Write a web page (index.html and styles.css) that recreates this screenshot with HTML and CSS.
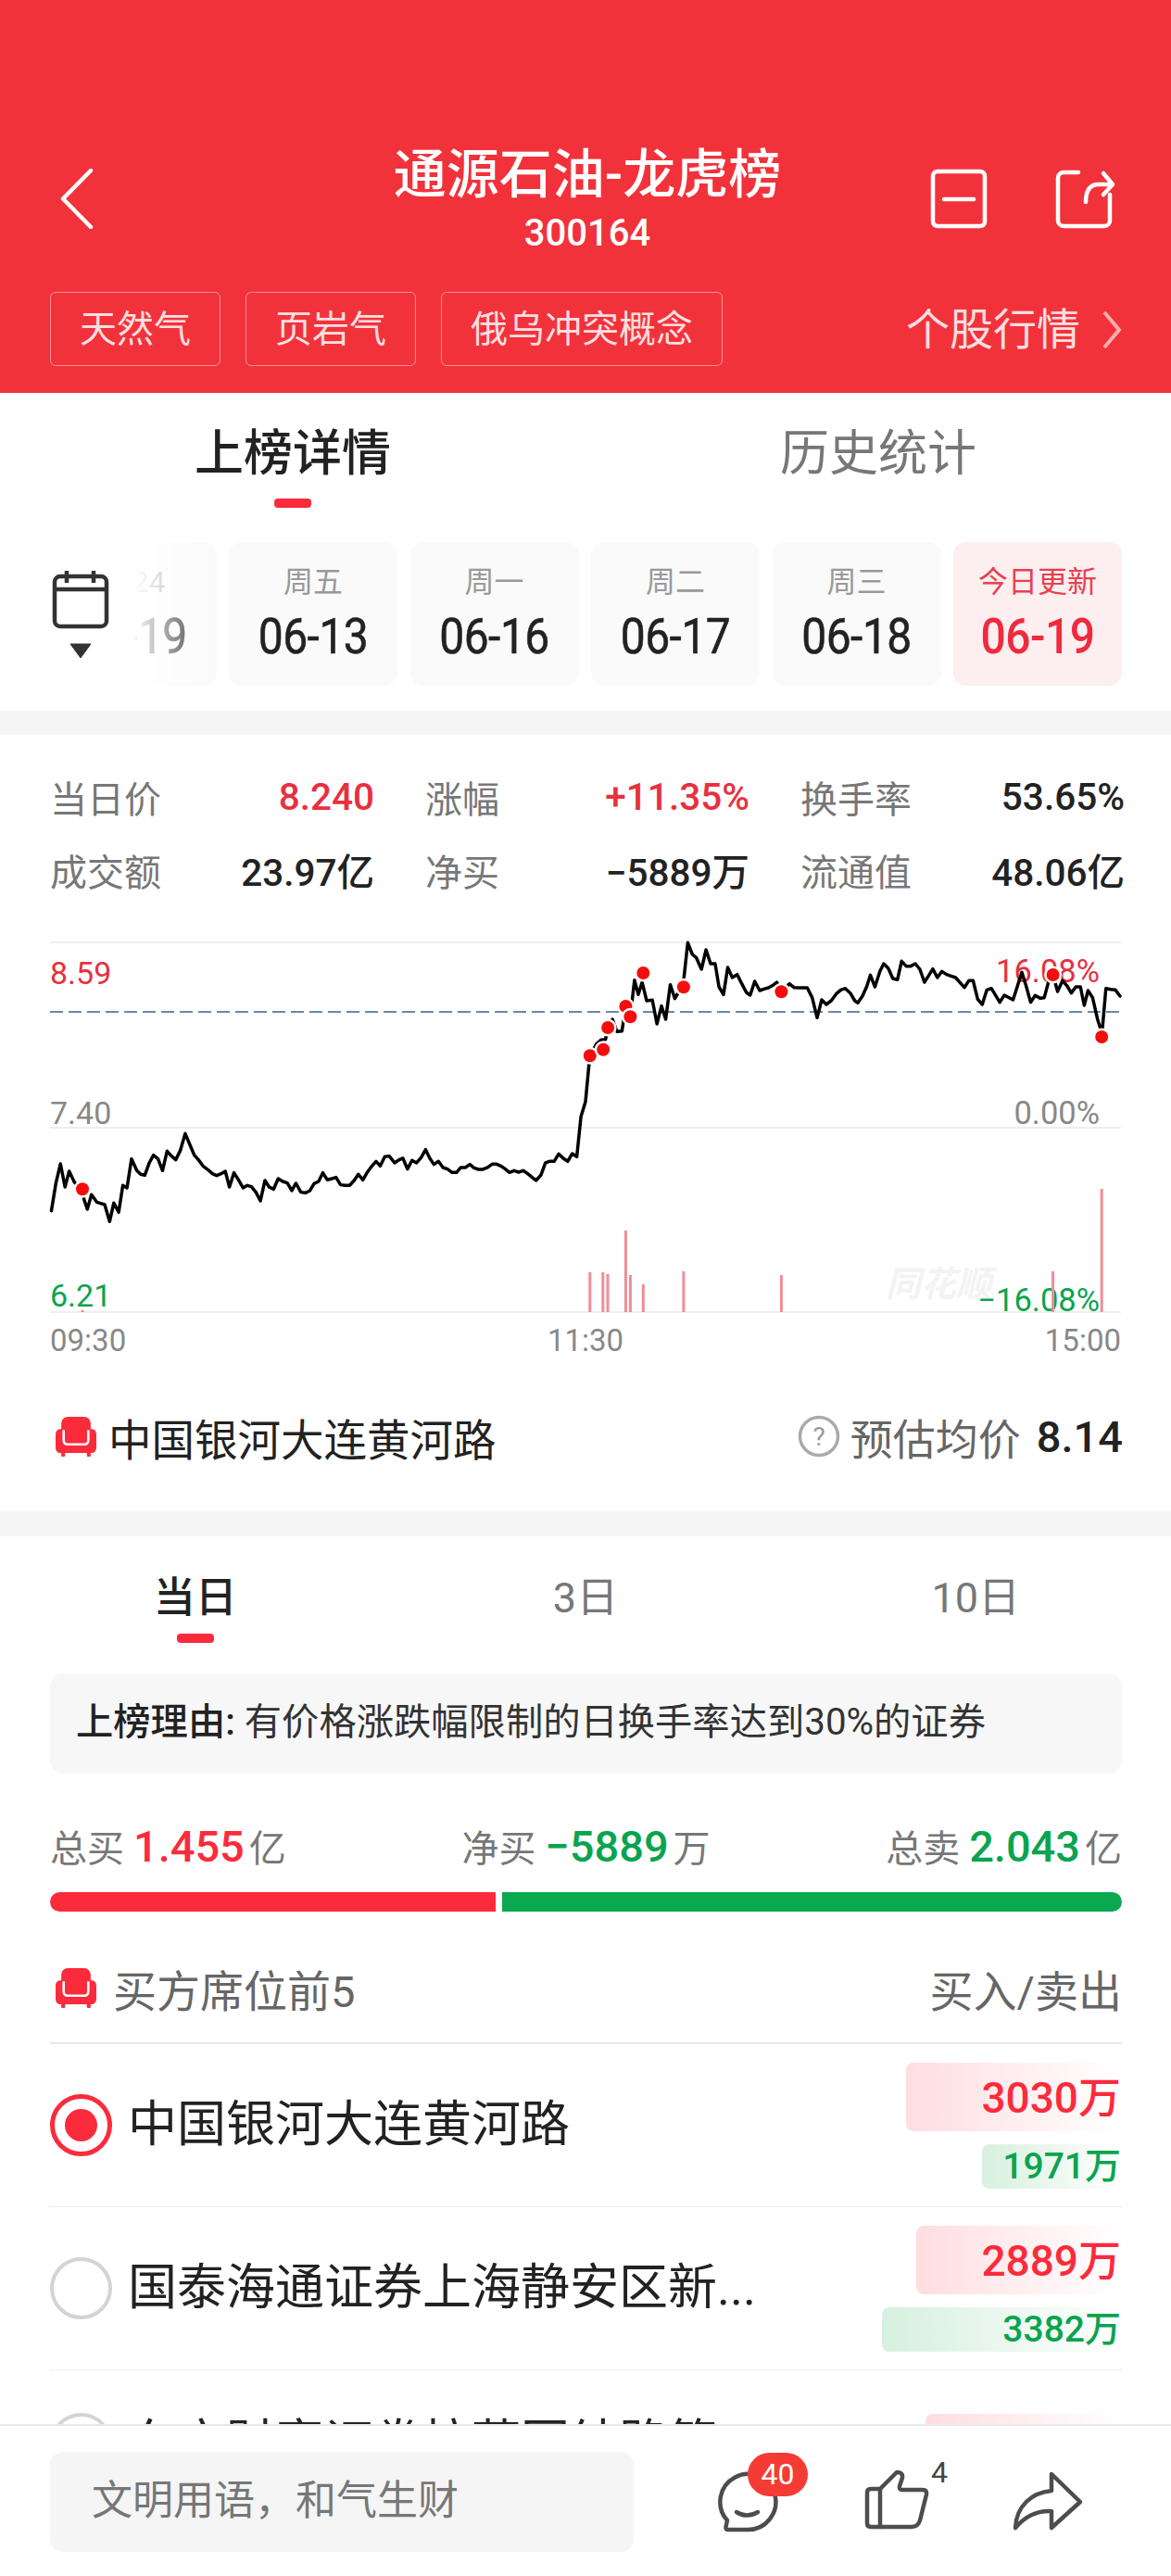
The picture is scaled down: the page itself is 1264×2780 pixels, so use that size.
FILE: index.html
```html
<!DOCTYPE html>
<html lang="zh-CN">
<head>
<meta charset="utf-8">
<title>通源石油-龙虎榜</title>
<link rel="stylesheet" href="styles.css">
</head>
<body>
<div class="app">
<main class="main">
  <header class="hero">
    <div class="nav">
      <svg class="nav__back" width="38" height="65" viewBox="0 0 38 65"><polyline points="34,2 4,32.5 34,63"/></svg>
      <div class="nav__title">
        <h1 class="nav__name">通源石油-龙虎榜</h1>
        <div class="nav__code">300164</div>
      </div>
      <div class="nav__icons">
        <svg width="64" height="65" viewBox="0 0 64 65"><rect x="4" y="3" width="56" height="59" rx="5"/><line x1="16" y1="33" x2="48" y2="33"/></svg>
        <svg width="66" height="65" viewBox="0 0 66 65"><path d="M26 4H10a6 6 0 0 0-6 6v46a6 6 0 0 0 6 6h44a6 6 0 0 0 6-6V28"/><path d="M34 36c0-13 5-19 14-19h14"/><polyline points="53,5 63,17 53,28"/></svg>
      </div>
    </div>
    <div class="hero__tags">
      <span class="tag">天然气</span>
      <span class="tag">页岩气</span>
      <span class="tag">俄乌冲突概念</span>
      <span class="hero__link">个股行情
        <svg width="24" height="44" viewBox="0 0 24 44"><polyline points="4,3 20,22 4,41"/></svg>
      </span>
    </div>
  </header>

  <nav class="tabs">
    <div class="tabs__item tabs__item--on">上榜详情<i class="tabs__bar"></i></div>
    <div class="tabs__item">历史统计</div>
  </nav>

  <section class="dates">
    <div class="dates__cal">
      <svg width="64" height="96" viewBox="0 0 64 96"><rect x="4" y="7" width="56" height="54" rx="6"/><line x1="4" y1="21" x2="60" y2="21"/><line x1="17" y1="1" x2="17" y2="14"/><line x1="46" y1="1" x2="46" y2="14"/><path class="dates__tri" d="M21 80h22l-11 15z"/></svg>
    </div>
    <div class="date date--fade"><span class="date__wk">2024</span><span class="date__day">06-19</span></div>
    <div class="date"><span class="date__wk">周五</span><span class="date__day">06-13</span></div>
    <div class="date"><span class="date__wk">周一</span><span class="date__day">06-16</span></div>
    <div class="date"><span class="date__wk">周二</span><span class="date__day">06-17</span></div>
    <div class="date"><span class="date__wk">周三</span><span class="date__day">06-18</span></div>
    <div class="date date--today"><span class="date__wk">今日更新</span><span class="date__day">06-19</span></div>
  </section>
  <div class="gap"></div>

  <section class="stats">
    <div class="stat"><span class="stat__k">当日价</span><span class="stat__v up">8.240</span></div>
    <div class="stat"><span class="stat__k">涨幅</span><span class="stat__v up">+11.35%</span></div>
    <div class="stat"><span class="stat__k">换手率</span><span class="stat__v">53.65%</span></div>
    <div class="stat"><span class="stat__k">成交额</span><span class="stat__v">23.97亿</span></div>
    <div class="stat"><span class="stat__k">净买</span><span class="stat__v">−5889万</span></div>
    <div class="stat"><span class="stat__k">流通值</span><span class="stat__v">48.06亿</span></div>
  </section>

  <section class="chart">
    <span class="chart__mark">同花顺</span>
    <span class="chart__l chart__l--top up">8.59</span>
    <span class="chart__l chart__l--mid grey">7.40</span>
    <span class="chart__l chart__l--low down">6.21</span>
    <span class="chart__r chart__r--top up">16.08%</span>
    <span class="chart__r chart__r--mid grey">0.00%</span>
    <span class="chart__r chart__r--low down">−16.08%</span>
    <div class="chart__times"><span>09:30</span><span>11:30</span><span>15:00</span></div>
    <svg class="chart__svg" width="1264" height="480" viewBox="0 980 1264 480">
      <g class="grid"><line x1="54" y1="1017" x2="1210" y2="1017"/><line x1="54" y1="1217" x2="1210" y2="1217"/><line x1="54" y1="1416" x2="1210" y2="1416"/></g>
      <line class="dash" x1="54" y1="1092" x2="1210" y2="1092"/>
      <g class="vol">
        <line x1="89" y1="1414" x2="89" y2="1416"/><line x1="636.8" y1="1373" x2="636.8" y2="1416"/><line x1="650.8" y1="1373" x2="650.8" y2="1416"/><line x1="656" y1="1375" x2="656" y2="1416"/><line x1="675.4" y1="1328" x2="675.4" y2="1416"/><line x1="680.4" y1="1376" x2="680.4" y2="1416"/><line x1="694.3" y1="1386" x2="694.3" y2="1416"/><line x1="737.9" y1="1372" x2="737.9" y2="1416"/><line x1="843.4" y1="1376" x2="843.4" y2="1416"/><line x1="1136.6" y1="1372" x2="1136.6" y2="1416"/><line x1="1189.2" y1="1283" x2="1189.2" y2="1416"/>
      </g>
      <polyline class="price" transform="translate(0 990) scale(.408 .3333)" points="136,950 148,860 160,798 172,873 183,822 197,858 218,880 222,912 231,945 242,898 256,922 277,930 290,985 301,925 314,955 325,868 336,876 348,782 362,820 372,832 383,835 395,795 406,770 418,782 430,820 442,757 453,772 465,785 477,755 490,700 502,735 514,770 525,785 537,805 550,817 562,830 573,836 585,830 596,822 607,873 619,827 631,850 643,876 654,868 665,872 677,890 689,918 701,852 712,873 724,880 736,846 748,855 760,860 772,885 783,861 796,890 808,892 820,885 831,862 843,855 854,827 866,850 878,846 889,842 901,866 913,868 925,868 937,852 948,832 960,850 972,825 984,805 995,790 1006,805 1018,775 1030,773 1044,795 1056,785 1066,780 1078,815 1090,787 1102,795 1114,778 1126,752 1137,780 1148,800 1160,790 1172,810 1184,815 1196,826 1208,826 1219,810 1231,810 1243,800 1254,811 1266,816 1278,816 1290,810 1302,799 1314,799 1325,805 1337,815 1348,826 1360,820 1372,825 1384,820 1396,830 1418,852 1431,835 1443,795 1454,790 1466,790 1478,766 1490,780 1502,790 1514,765 1526,775 1537,645 1549,597 1558,480"/>
      <polyline class="price" transform="translate(620 990) scale(.4107 .3333)" points="38,480 41,448 58,410 70,397 82,395 88,357 100,330 112,370 125,368 135,288 147,322 158,203 168,250 178,210 190,270 205,268 217,345 229,287 240,330 252,218 264,263 275,240 288,195 298,82 310,120 320,130 334,168 346,105 358,150 370,150 380,225 392,250 403,162 415,195 428,185 440,215 452,243 462,252 474,207 487,237 498,232 510,228 522,220 532,210 544,241 565,215 577,227 590,228 612,228 625,260 638,325 650,267 662,282 675,270 688,248 700,235 712,230 725,245 737,270 745,277 757,255 768,225 778,187 790,225 803,175 813,150 825,165 837,198 849,202 860,142 872,158 884,158 896,150 908,168 920,210 932,187 942,167 954,195 966,175 978,185 990,190 1002,195 1014,212 1025,227 1037,205 1048,205 1060,265 1072,282 1084,235 1096,230 1118,275 1130,252 1153,267 1176,178 1188,225 1199,275 1211,253 1225,262 1235,260 1247,205 1258,186 1270,240 1283,205 1295,222 1306,245 1318,225 1330,225 1340,285 1350,237 1362,260 1375,330 1382,358 1388,358 1397,230 1410,233 1422,235 1434,255"/>
      <g class="dots">
        <circle cx="89" cy="1283.3" r="7"/><circle cx="636.8" cy="1139.3" r="7"/><circle cx="651.2" cy="1132.7" r="7"/><circle cx="675.4" cy="1086" r="7"/><circle cx="656.1" cy="1109" r="7"/><circle cx="680.4" cy="1097.3" r="7"/><circle cx="694.3" cy="1050" r="7"/><circle cx="737.9" cy="1065.3" r="7"/><circle cx="843.4" cy="1070.3" r="7"/><circle cx="1136.6" cy="1052" r="7"/><circle cx="1189.2" cy="1119" r="7"/>
      </g>
    </svg>
  </section>

  <section class="broker">
    <svg class="sofa" width="44" height="43" viewBox="0 0 43 42"><use href="#sofa"/></svg>
    <span class="broker__name">中国银河大连黄河路</span>
    <span class="broker__avg">
      <svg width="46" height="46" viewBox="0 0 46 46"><circle cx="23" cy="23" r="20.5"/><text x="23" y="33" text-anchor="middle">?</text></svg>
      <span class="broker__k">预估均价</span><b class="broker__v">8.14</b>
    </span>
  </section>
  <div class="gap"></div>

  <nav class="periods">
    <div class="periods__item periods__item--on">当日<i class="tabs__bar"></i></div>
    <div class="periods__item">3日</div>
    <div class="periods__item">10日</div>
  </nav>

  <p class="reason"><b class="reason__k">上榜理由:</b> 有价格涨跌幅限制的日换手率达到30%的证券</p>

  <section class="sum">
    <span class="sum__i">总买 <b class="sum__n up2">1.455</b> 亿</span>
    <span class="sum__i">净买 <b class="sum__n down">−5889</b> 万</span>
    <span class="sum__i">总卖 <b class="sum__n down">2.043</b> 亿</span>
  </section>
  <div class="ratio"><i class="ratio__buy"></i><i class="ratio__sell"></i></div>

  <div class="seats">
    <svg class="sofa" width="44" height="43" viewBox="0 0 43 42"><g id="sofa"><rect class="sofa__f" x="6" y="0" width="31" height="30" rx="7"/><rect class="sofa__f" x="0" y="13" width="43" height="25" rx="5"/><rect class="sofa__f" x="6" y="36" width="4" height="6" rx="1"/><rect class="sofa__f" x="33" y="36" width="4" height="6" rx="1"/><path class="sofa__s" d="M8.500 14v11a4 4 0 0 0 4 4h18a4 4 0 0 0 4-4V14"/></g></svg>
    <span class="seats__t">买方席位前5</span>
    <span class="seats__r">买入/卖出</span>
  </div>

  <div class="row">
    <span class="radio radio--on"></span>
    <span class="row__name">中国银河大连黄河路</span>
    <div class="row__vals">
      <span class="val val--buy" style="width:233px">3030万</span>
      <span class="val val--sell" style="width:151px">1971万</span>
    </div>
  </div>
  <div class="row">
    <span class="radio"></span>
    <span class="row__name">国泰海通证券上海静安区新...</span>
    <div class="row__vals">
      <span class="val val--buy" style="width:222px">2889万</span>
      <span class="val val--sell" style="width:259px">3382万</span>
    </div>
  </div>
  <div class="row row--clip">
    <span class="radio"></span>
    <span class="row__name">东方财富证券拉萨团结路第...</span>
    <div class="row__vals">
      <span class="val val--buy" style="width:212px">2504万</span>
    </div>
  </div>
</main>

<footer class="foot">
  <div class="foot__input">文明用语，和气生财</div>
  <div class="foot__ico foot__ico--c">
    <svg width="72" height="72" viewBox="0 0 72 72"><path d="M15 56A30 30 0 1 1 37 66H16q-3 0-2.500-3z"/><path d="M25 47q11 7 23 0"/></svg>
    <span class="foot__badge">40</span>
  </div>
  <div class="foot__ico foot__ico--t">
    <svg width="72" height="72" viewBox="0 0 72 72"><path d="M18 22H8q-4 0-4 4v33q0 4 4 4h44q7 0 9-7l7-28q1-5-4-5H42q-4 0-3-4l3-9q1-6-6-6z"/><line x1="18" y1="22" x2="18" y2="63"/></svg>
    <span class="foot__num">4</span>
  </div>
  <div class="foot__ico foot__ico--s">
    <svg width="78" height="72" viewBox="0 0 78 72"><path d="M43 6L74 36L43 64V46C26 45 14 52 4 64C5 40 22 26 43 24Z"/></svg>
  </div>
</footer>
</div>
</body>
</html>
```
FILE: styles.css
```css
* { box-sizing: border-box; }
html, body { margin: 0; padding: 0; background: #fff; }
body { font-family: Roboto, "Noto Sans CJK SC", sans-serif; color: #222; }
i { display: block; }
h1, p { margin: 0; font-weight: 400; }
b { font-weight: 500; }

.app { width: 1264px; height: 2780px; display: flex; flex-direction: column; overflow: hidden; }
.main { height: 2616px; overflow: hidden; flex: none; }

.up { color: #e8303f; }
.up2 { color: #fb2b3c; }
.down { color: #0aa44f; }
.grey { color: #888; }

.hero { height: 424px; background: #f2323b; padding-top: 152px; color: #fff; }
.nav { display: grid; grid-template-columns: 1fr auto 1fr; align-items: center; height: 124px; padding: 0 60px 0 64px; }
.nav svg { fill: none; stroke: #fff; stroke-width: 4.5; stroke-linejoin: round; stroke-linecap: round; }
.nav__back { justify-self: start; }
.nav__title { text-align: center; }
.nav__name { font-size: 57px; line-height: 72px; font-weight: 500; }
.nav__code { font-size: 40px; line-height: 48px; font-weight: 500; padding-top: 3px; }
.nav__icons { display: flex; gap: 71px; justify-self: end; }

.hero__tags { display: flex; align-items: center; gap: 27px; margin-top: 39px; padding: 0 52px 0 54px; }
.tag { height: 80px; line-height: 80px; padding: 0 31px; font-size: 40px; border: 1px solid rgba(255, 255, 255, .45); border-radius: 6px; color: rgba(255, 255, 255, .86); }
.hero__link { margin-left: auto; display: flex; align-items: center; gap: 22px; font-size: 47px; line-height: 60px; margin-top: 2px; color: rgba(255, 255, 255, .86); }
.hero__link svg { fill: none; stroke: rgba(255, 255, 255, .6); stroke-width: 4; }

.tabs { display: flex; height: 161px; }
.tabs__item { flex: 1; display: flex; flex-direction: column; align-items: center; padding-top: 31px; font-size: 53px; line-height: 70px; color: #777; }
.tabs__item--on { color: #222; font-weight: 500; }
.tabs__bar { width: 40px; height: 10px; border-radius: 4px; background: #fb2b3c; margin-top: 13px; }

.dates { position: relative; display: flex; justify-content: flex-end; gap: 13.5px; padding-right: 53px; height: 182px; }
.dates__cal { position: absolute; left: 55px; top: 30px; }
.dates__cal svg { fill: none; stroke: #333; stroke-width: 4.5; }
.dates__cal .dates__tri { fill: #333; stroke-width: 1; stroke-linejoin: round; }
.date { width: 182px; height: 155px; flex: none; background: #fafafa; border-radius: 14px; display: flex; flex-direction: column; align-items: center; padding-top: 22px; }
.date__wk { font-size: 32px; line-height: 42px; color: #999; }
.date__day { font-size: 48px; line-height: 60px; margin-top: 8px; letter-spacing: -.5px; -webkit-text-stroke: .5px currentColor; transform: scaleY(1.12); }
.date--fade { -webkit-mask-image: linear-gradient(to right, transparent 50%, #000 100%); mask-image: linear-gradient(to right, transparent 50%, #000 100%); }
.date--today { background: #fdeef0; }
.date--today .date__wk { color: #e8404f; }
.date--today .date__day { color: #ee2b3e; font-weight: 500; -webkit-text-stroke: 0; }

.gap { height: 27px; background: #f5f5f5; }
.dates + .gap { height: 26px; }

.stats { display: grid; grid-template-columns: repeat(3, 1fr); column-gap: 55px; padding: 27px 50px 0 54px; height: 187px; grid-auto-rows: 79px; }
.stat { display: flex; justify-content: space-between; align-items: center; }
.stat__k { font-size: 40px; color: #777; }
.stat__v { font-size: 40.500px; font-weight: 500; }

.chart { position: relative; height: 480px; }
.chart__svg { position: absolute; left: 0; top: 0; }
.chart__l, .chart__r { position: absolute; font-size: 34px; line-height: 34px; }
.chart__l { left: 54px; }
.chart__r { right: 77px; font-size: 34.500px; }
.chart__l--top { top: 53px; }
.chart__l--mid { top: 204px; }
.chart__l--low { top: 401px; }
.chart__r--top { top: 51px; }
.chart__r--mid { top: 204px; }
.chart__r--low { top: 406px; }
.chart__times { position: absolute; left: 54px; right: 54px; top: 450px; display: flex; justify-content: space-between; font-size: 33px; line-height: 34px; color: #888; }
.chart__mark { position: absolute; left: 956px; top: 384px; font-size: 38px; line-height: 44px; font-weight: 700; font-style: italic; color: #f3f3f3; }
.grid line { stroke: #eee; stroke-width: 2; }
.dash { stroke: #6b88ad; stroke-width: 2; stroke-dasharray: 14 6; }
.vol line { stroke: #ef8d96; stroke-width: 3; }
.price { fill: none; stroke: #000; stroke-width: 3.5; stroke-linejoin: round; stroke-linecap: round; vector-effect: non-scaling-stroke; }
.dots circle { fill: #f50d0d; stroke: #fff; stroke-width: 5; paint-order: stroke; }

.broker { display: flex; align-items: center; height: 88px; margin: 46px 0 37px; padding: 0 52px 0 60px; }
.sofa { flex: none; }
.sofa__f { fill: #fb2b3c; }
.sofa__s { fill: none; stroke: #fff; stroke-width: 2.500; }
.broker__name { margin-left: 13px; font-size: 46.500px; }
.broker__avg { margin-left: auto; display: flex; align-items: center; }
.broker__avg svg { fill: none; stroke: #aaa; stroke-width: 3.5; }
.broker__avg text { fill: #999; stroke: none; font-size: 28px; font-family: Roboto, sans-serif; }
.broker__k { margin-left: 11px; font-size: 46px; color: #666; }
.broker__v { margin-left: 17px; font-size: 47px; color: #222; }

.periods { display: flex; height: 115px; }
.periods__item { flex: 1; display: flex; flex-direction: column; align-items: center; padding-top: 37px; font-size: 45px; line-height: 60px; color: #777; }
.periods__item--on { color: #222; font-weight: 500; }
.periods__item .tabs__bar { margin-top: 8px; }

.reason { margin: 33px 53px 0 54px; height: 108px; line-height: 106px; padding-left: 28px; background: #f7f7f7; border-radius: 14px; font-size: 40.300px; color: #333; }
.reason__k { color: #222; }

.sum { display: flex; justify-content: space-between; margin: 48px 53px 0 54px; height: 60px; align-items: center; }
.sum__i { font-size: 40px; color: #777; }
.sum__n { font-size: 47px; margin-right: -5px; }

.ratio { display: flex; gap: 7px; height: 21px; margin: 20px 53px 0 54px; }
.ratio__buy { width: 481px; background: #fb2b3c; border-radius: 11px 0 0 11px; }
.ratio__sell { flex: 1; background: #0aa84f; border-radius: 0 11px 11px 0; }

.seats { display: flex; align-items: center; margin: 55px 53px 0 54px; padding: 0 0 32px 6px; height: 88px; border-bottom: 2px solid #e8e8e8; }
.seats__t { margin-left: 18px; font-size: 47px; color: #666; }
.seats__r { margin-left: auto; font-size: 47px; color: #666; }

.row { display: flex; align-items: center; height: 176px; margin: 0 53px 0 54px; border-bottom: 1px solid #eee; }
.row--clip { align-items: flex-start; padding-top: 46px; border: 0; }
.radio { flex: none; width: 67px; height: 67px; border-radius: 50%; border: 4px solid #d4d4d4; position: relative; }
.radio--on { border: 5px solid #fb2b3c; }
.radio--on::after { content: ""; position: absolute; left: 11px; top: 11px; width: 35px; height: 35px; border-radius: 50%; background: #fb2b3c; }
.row__name { margin-left: 17px; font-size: 53px; line-height: 67px; color: #222; white-space: nowrap; }
.row__vals { margin-left: auto; display: flex; flex-direction: column; align-items: flex-end; gap: 14px; }
.val { display: block; text-align: right; padding-right: 1px; border-radius: 8px 0 0 8px; }
.val--buy { height: 74px; line-height: 76px; font-size: 46px; font-weight: 500; color: #fb2b3c; background: linear-gradient(to right, #ffdde1, #fff); }
.val--sell { height: 48px; line-height: 48px; font-size: 39px; font-weight: 500; color: #0aa44f; background: linear-gradient(to right, #d7f0df, #fff); }
.row--clip .row__vals { margin-top: 1px; }

.foot { flex: none; height: 164px; display: flex; align-items: flex-start; padding: 28px 0 0 54px; border-top: 2px solid #e8e8e8; background: #fff; }
.foot__input { width: 630px; height: 108px; line-height: 106px; padding-left: 45px; background: #f5f5f5; border-radius: 14px; font-size: 44px; color: #777; }
.foot__ico { position: relative; flex: none; margin-top: 18px; }
.foot__ico svg { display: block; fill: none; stroke: #4d4d4d; stroke-width: 4.5; stroke-linejoin: round; stroke-linecap: round; }
.foot__ico--c { margin-left: 86px; }
.foot__ico--t { margin-left: 90px; }
.foot__ico--s { margin-left: 88px; }
.foot__badge { position: absolute; left: 37px; top: -17px; width: 65px; height: 47px; line-height: 46px; text-align: center; border-radius: 24px; background: #f43c34; color: #fff; font-size: 32px; }
.foot__num { position: absolute; left: 73px; top: -16px; font-size: 32px; line-height: 40px; color: #444; }
```
